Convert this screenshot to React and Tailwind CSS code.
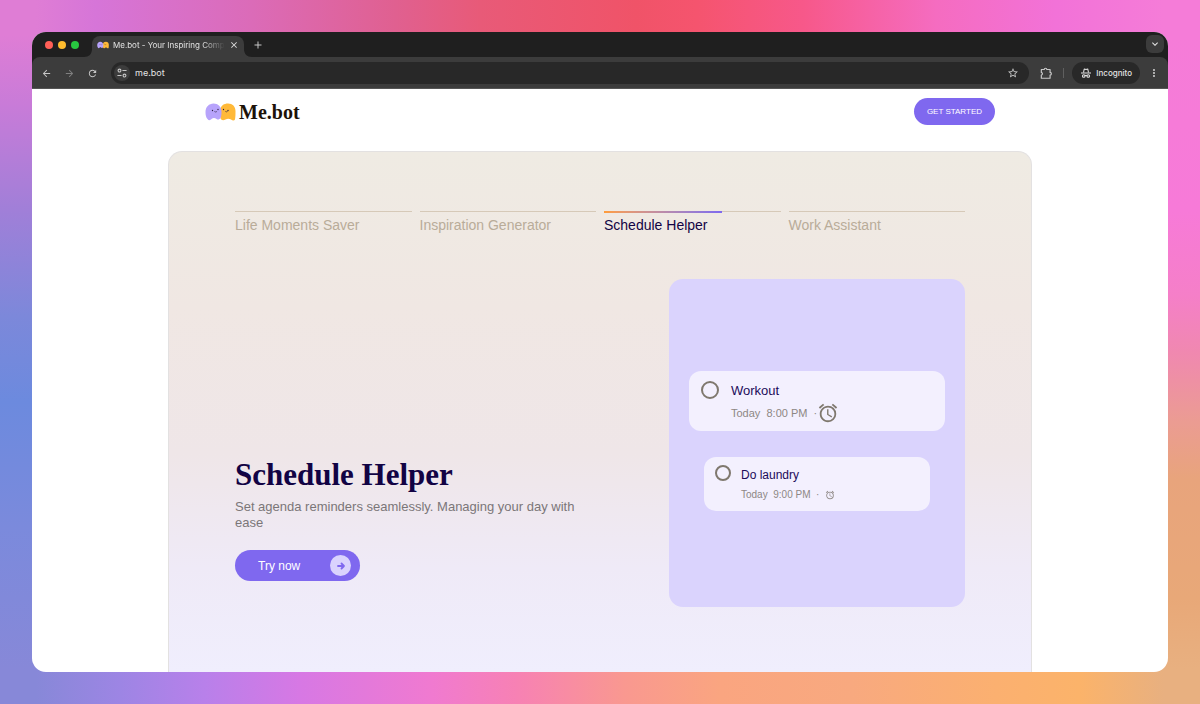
import { useState } from 'react';
import {
  MdAccessAlarm,
  MdAdd,
  MdArrowBack,
  MdArrowForward,
  MdClose,
  MdExpandMore,
  MdMoreVert,
  MdRefresh,
  MdStarOutline,
} from 'react-icons/md';

const TABS = [
  { title: 'Life Moments Saver', progress: 0 },
  { title: 'Inspiration Generator', progress: 0 },
  { title: 'Schedule Helper', progress: 67 },
  { title: 'Work Assistant', progress: 0 },
];

const Mascots = ({ className }) => (
  <svg className={className} viewBox="0 0 62 36" aria-hidden="true">
    <path fill="#ffb938" d="M30 14C32 5 38 1 46 1c9 0 15 6 15 15 0 7 0 12-1 17-2 3-5 2-8 0-4-2-7-2-11 0-4 2-8 2-10-2z" />
    <path fill="#b7a3fb" d="M17 1C8 1 1 8 1 18c0 6 1 11 4 14 3 4 6 2 8 0 4-3 7-2 10 0 3 2 6 1 8-2 2-4 2-8 2-13C33 8 26 1 17 1z" />
    <g fill="none" stroke="#2b2140" strokeWidth="1.2" strokeLinecap="round">
      <path d="M19 17c1 1.500 3 1.500 4.500 0M41 17c1.500 1.500 3 1 4-.5" />
    </g>
    <g fill="#2b2140">
      <circle cx="15" cy="15" r="1.3" />
      <circle cx="26" cy="13" r="1.3" />
      <circle cx="37" cy="13" r="1.3" />
      <circle cx="46" cy="15" r="1.3" />
    </g>
  </svg>
);

const SiteInfoIcon = () => (
  <svg className="size-2.5" viewBox="0 0 24 24" fill="none" stroke="currentColor" strokeWidth="2.6" aria-hidden="true">
    <circle cx="6" cy="6" r="3.4" />
    <circle cx="18" cy="18" r="3.4" />
    <path d="M13 6h10M1 18h10" />
  </svg>
);

const ExtensionsIcon = () => (
  <svg className="size-3.5" viewBox="0 0 24 24" fill="none" stroke="currentColor" strokeWidth="2" strokeLinejoin="round" aria-hidden="true">
    <path d="M4 6h5a2.200 2.200 0 0 1 4.400 0H19v5a2.200 2.200 0 0 1 0 4.400V21H4v-5.500c2.500-.5 2.500-4 0-4.500z" />
  </svg>
);

const IncognitoIcon = () => (
  <svg className="size-3" viewBox="0 0 24 24" fill="none" stroke="currentColor" strokeWidth="2.2" aria-hidden="true">
    <path d="M2 12h20" />
    <path d="M7 11l1.500-7 3.500 1 3.500-1L17 11" strokeLinejoin="round" />
    <circle cx="7.500" cy="18" r="2.600" />
    <circle cx="16.500" cy="18" r="2.600" />
    <path d="M10 17.500c1-1 3-1 4 0" />
  </svg>
);

const TitleBar = () => (
  <div className="flex items-end bg-[#1f1f1f] pl-[13px] pr-1">
    <div className="flex gap-[5px] pb-2">
      <span className="size-2 rounded-full bg-[#ff5f57]" />
      <span className="size-2 rounded-full bg-[#febc2e]" />
      <span className="size-2 rounded-full bg-[#28c840]" />
    </div>
    <svg className="ml-[5px] h-2 w-2 text-[#3c3c3c]" viewBox="0 0 8 8" fill="currentColor" aria-hidden="true">
      <path d="M8 0v8H0c5 0 8-3 8-8z" />
    </svg>
    <div className="mt-1 flex h-[21px] w-[152px] items-center rounded-t-lg bg-[#3c3c3c] pb-1 pl-[5px] pr-1.5 text-[8px] text-[#e3e3e3]">
      <Mascots className="h-2 w-3 shrink-0" />
      <span className="ml-1 flex-1 whitespace-nowrap mask-r-from-80%">
        Me.bot - Your Inspiring Comp
      </span>
      <button aria-label="Close tab" className="ml-1">
        <MdClose className="size-2.5" />
      </button>
    </div>
    <svg className="h-2 w-2 text-[#3c3c3c]" viewBox="0 0 8 8" fill="currentColor" aria-hidden="true">
      <path d="M0 0v8h8C3 8 0 5 0 0z" />
    </svg>
    <button aria-label="New tab" className="pb-1.5 text-[#c7c7c7]">
      <MdAdd className="size-3" />
    </button>
    <button aria-label="Search tabs" className="mb-1 ml-auto flex size-[18px] items-center justify-center rounded-md bg-[#3c3c3c] text-[#e3e3e3]">
      <MdExpandMore className="size-3" />
    </button>
  </div>
);

const Toolbar = () => (
  <div className="bg-[#1f1f1f]">
    <div className="flex items-center rounded-t-lg border-b border-[#555] bg-[#3c3c3c] px-2 pb-1 pt-[5px] text-[#c7c7c7]">
      <button aria-label="Back" className="p-px"><MdArrowBack className="size-[11px]" /></button>
      <button aria-label="Forward" className="ml-2.5 p-px text-[#808080]"><MdArrowForward className="size-[11px]" /></button>
      <button aria-label="Reload" className="ml-2.5 p-px"><MdRefresh className="size-[11px]" /></button>
      <div className="ml-3 flex h-[22px] flex-1 items-center rounded-full bg-[#282828] pl-[3px] pr-2.5">
        <button aria-label="Site information" className="flex size-4 items-center justify-center rounded-full bg-[#3c3c3c]">
          <SiteInfoIcon />
        </button>
        <input
          aria-label="Address"
          defaultValue="me.bot"
          className="ml-[5px] min-w-0 flex-1 bg-transparent text-[9px] leading-4 text-[#e3e3e3] outline-none"
        />
        <button aria-label="Bookmark"><MdStarOutline className="size-3" /></button>
      </div>
      <button aria-label="Extensions" className="ml-2.5"><ExtensionsIcon /></button>
      <span className="ml-2.5 h-2.5 w-px bg-[#5f5f5f]" />
      <button className="ml-2 flex h-[22px] items-center gap-1 rounded-full bg-[#282828] px-2 text-[8px] font-medium text-[#e3e3e3]">
        <IncognitoIcon />
        Incognito
      </button>
      <button aria-label="Menu" className="ml-2"><MdMoreVert className="size-3" /></button>
    </div>
  </div>
);

const SchedulePreview = () => (
  <div className="flex h-[328px] w-[296px] shrink-0 flex-col items-center justify-center gap-[26px] rounded-[14px] bg-[#dad3fd] pb-1">
    <div className="flex h-[60px] w-[256px] gap-3 rounded-xl bg-[#f3f0fe] px-3 py-2.5">
      <input type="checkbox" id="workout" className="size-[18px] shrink-0 appearance-none rounded-full border-2 border-[#7f786e]" />
      <div>
        <label htmlFor="workout" className="block text-[13px] leading-5 text-[#1c0b59]">Workout</label>
        <p className="flex items-center whitespace-pre text-[11px] leading-6 text-[#8d8784]">
          Today  8:00 PM  ·<MdAccessAlarm className="size-[22px] text-[#7f786e]" />
        </p>
      </div>
    </div>
    <div className="flex h-[54px] w-[226px] gap-2.5 rounded-xl bg-[#f3f0fe] px-[11px] py-2">
      <input type="checkbox" id="laundry" className="size-4 shrink-0 appearance-none rounded-full border-2 border-[#7f786e]" />
      <div>
        <label htmlFor="laundry" className="block text-[12px] leading-5 text-[#1c0b59]">Do laundry</label>
        <p className="flex items-center whitespace-pre text-[10px] leading-5 text-[#8d8784]">
          Today  9:00 PM  ·  <MdAccessAlarm className="size-2.5" />
        </p>
      </div>
    </div>
  </div>
);

// Backdrop behind the window: one gradient per edge
const Backdrop = ({ children }) => (
  <div
    className="flex min-h-screen flex-col bg-[linear-gradient(to_bottom,#df7dd5_5%,#c87bd8_15%,#a07fd8_30%,#7c88da_45%,#6c8ade_57%,#7b8adc_75%,#8788d8_95%),linear-gradient(to_bottom,#f57cd8_5%,#f77ad8_30%,#f57fc8_42%,#f088b0_50%,#eb9c92_60%,#e8a47c_68%,#e8a878_85%,#e8b080_95%),linear-gradient(to_right,#df7dd5_3%,#d675d8_8%,#db6bb8_21%,#e06090_33%,#e85a78_40%,#f05368_53%,#f5546e_58%,#f7588a_67%,#f56cc0_78%,#f272d8_88%,#f57cd8_97%),linear-gradient(to_right,#8788d8_3%,#9d85e4_10%,#b880ea_17%,#d778e4_25%,#f07ad0_36%,#f781b4_43%,#f99890_52%,#faa580_60%,#f8a97f_71%,#fbb070_83%,#fbb36a_90%,#e8b080_97%)] bg-[size:32px_100%,32px_100%,100%_50%,100%_50%] bg-[position:left,right,top,bottom] bg-no-repeat p-8 font-['Liberation_Sans',Arial,sans-serif]"
  >
    {children}
  </div>
);

const App = () => {
  const [active, setActive] = useState(2);

  return (
    <Backdrop>
      <div className="flex flex-1 flex-col overflow-hidden rounded-[14px] bg-white">
        <header className="font-[Inter,sans-serif]">
          <TitleBar />
          <Toolbar />
        </header>

        <nav className="mx-auto flex w-full max-w-[790px] items-center justify-between pb-[26px] pt-[9px]">
          <a href="#home" className="flex items-center gap-[3px] font-['Liberation_Serif',serif] text-[20px] font-bold leading-6 text-[#1d1208]">
            <Mascots className="h-[18px] w-[31px]" />
            Me.bot
          </a>
          <a href="#start" className="rounded-full bg-[#7f68ef] px-[13px] py-1.5 text-[8px] leading-[15px] text-white">
            GET STARTED
          </a>
        </nav>

        <main className="mx-auto flex w-full max-w-[864px] flex-1 flex-col rounded-t-[14px] border border-b-0 border-[#e3e1e1] bg-[linear-gradient(to_bottom,#efebe3,#f0e7e3_30%,#efe6e8_58%,#efeaf7_80%,#f0eefd)] px-[66px] pb-[64px] pt-[59px]">
          <div role="tablist" className="grid grid-cols-4 gap-2">
            {TABS.map((tab, index) => (
              <button
                key={tab.title}
                role="tab"
                aria-selected={index === active}
                onClick={() => setActive(index)}
                className={`text-left text-[14px] leading-5 ${index === active ? 'text-[#120344]' : 'text-[#b9ac99]'}`}
              >
                <span className="mb-[3px] block h-px bg-[#d6c9b8]">
                  <span
                    className="block h-[2px] bg-linear-to-r from-[#ff9c38] to-[#7f68ef]"
                    style={{ width: `${tab.progress}%` }}
                  />
                </span>
                {tab.title}
              </button>
            ))}
          </div>

          <div className="mt-11 flex justify-between">
            <div className="flex flex-col items-start justify-end pb-[26px]">
              <h1 className="font-['Liberation_Serif',serif] text-[31px] font-bold leading-10 text-[#120344]">
                {TABS[active].title}
              </h1>
              <p className="mt-1 max-w-[360px] text-[13px] leading-4 text-[#7b7678]">
                Set agenda reminders seamlessly. Managing your day with ease
              </p>
              <button className="mt-[19px] flex w-[125px] items-center justify-between rounded-full bg-[#7f68ef] py-[5px] pl-[23px] pr-[9px] text-[12px] text-white">
                Try now
                <span className="flex size-[21px] items-center justify-center rounded-full bg-[#dad3fd] text-[#7f68ef]">
                  <svg className="size-2.5" viewBox="0 0 10 10" fill="none" stroke="currentColor" strokeWidth="1.8" strokeLinecap="round" strokeLinejoin="round" aria-hidden="true">
                    <path d="M2 5h6M5.500 2.500L8 5 5.500 7.500" />
                  </svg>
                </span>
              </button>
            </div>
            <SchedulePreview />
          </div>
        </main>
      </div>
    </Backdrop>
  );
};

export default App;
